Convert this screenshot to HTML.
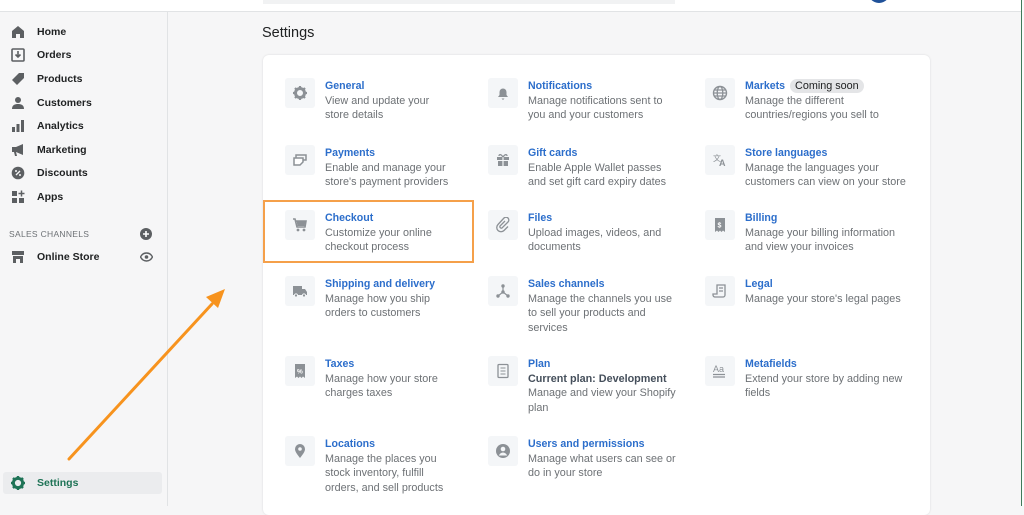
<!DOCTYPE html>
<html><head><meta charset="utf-8"><style>
*{margin:0;padding:0;box-sizing:border-box}
body{width:1024px;height:506px;overflow:hidden;background:#f6f6f7;font-family:"Liberation Sans",Arial,sans-serif;position:relative}
.top{position:absolute;left:0;top:0;width:1024px;height:12px;background:#fff;border-bottom:1px solid #e1e3e5}
.search{position:absolute;left:263px;top:0;width:412px;height:4px;background:#f1f2f3}
.avatar{position:absolute;left:868px;top:-8px;width:22px;height:11px;border-radius:0 0 11px 11px;background:#1f5199}
.side{position:absolute;left:0;top:12px;width:168px;height:494px;background:#f6f6f7;border-right:1px solid #e1e3e5}
.nav{position:absolute;left:37px;font-size:10.5px;font-weight:bold;color:#202223}
.nicon{position:absolute;left:11px;width:14px;height:14px}
.sc{position:absolute;left:9px;top:229px;font-size:8.5px;color:#6d7175;letter-spacing:.3px}
.card{position:absolute;left:263px;top:55px;width:667px;height:460px;background:#fff;border-radius:6px;box-shadow:0 0 2px rgba(0,0,0,.12)}
h1{position:absolute;left:262px;top:25px;font-size:14.5px;font-weight:normal;color:#202223}
.it{position:absolute;width:200px}
.ib{position:absolute;left:0;top:0;width:30px;height:30px;background:#f4f6f8;border-radius:3px}
.ib svg{position:absolute;left:7px;top:7px;width:16px;height:16px}
.tx{position:absolute;left:40px;top:1px;width:130px;font-size:10.8px;line-height:14.5px;color:#6d7175}
.c2 .tx{width:152px}
.c3 .tx{width:162px}
.tx b{display:block;color:#2c6ecb;font-weight:bold;font-size:10.6px}
.tx i{font-style:normal;color:#454f5b;font-weight:bold}
.badge{display:inline-block;background:#e4e5e7;color:#202223;font-weight:normal;border-radius:8px;padding:0 5px;margin-left:5px;line-height:14px}
.hl{position:absolute;left:263px;top:200px;width:211px;height:63px;border:2px solid #f5a04a}
.set{position:absolute;left:3px;top:472px;width:159px;height:22px;background:#ebecee;border-radius:3px}
.rline{position:absolute;left:1021px;top:0;width:3px;height:506px;background:#fafafa;border-left:1px solid #3f7a5a}
</style></head><body>
<div class="top"><div class="search"></div><div class="avatar"></div></div>
<div class="side"></div>
<svg class="nicon" style="top:25px" viewBox="0 0 14 14"><path d="M1 6L7 1l6 5v7H9V9H5v4H1z" fill="#5c5f62"/></svg>
<div class="nav" style="top:26px">Home</div>
<svg class="nicon" style="top:48px" viewBox="0 0 14 14"><rect x="1" y="1" width="12" height="12" rx="1" fill="none" stroke="#5c5f62" stroke-width="1.6"/><path d="M7 3v6M4.5 6.5L7 9l2.5-2.5" stroke="#5c5f62" stroke-width="1.6" fill="none"/></svg>
<div class="nav" style="top:49px">Orders</div>
<svg class="nicon" style="top:72px" viewBox="0 0 14 14"><path d="M1 8L8 1h5v5l-7 7z" fill="#5c5f62"/></svg>
<div class="nav" style="top:73px">Products</div>
<svg class="nicon" style="top:96px" viewBox="0 0 14 14"><circle cx="7" cy="4" r="3" fill="#5c5f62"/><path d="M1 13c0-4 3-5 6-5s6 1 6 5z" fill="#5c5f62"/></svg>
<div class="nav" style="top:97px">Customers</div>
<svg class="nicon" style="top:119px" viewBox="0 0 14 14"><rect x="1" y="8" width="3" height="5" fill="#5c5f62"/><rect x="5.5" y="5" width="3" height="8" fill="#5c5f62"/><rect x="10" y="1" width="3" height="12" fill="#5c5f62"/></svg>
<div class="nav" style="top:120px">Analytics</div>
<svg class="nicon" style="top:143px" viewBox="0 0 14 14"><path d="M1 4h4l7-3v11L5 9H1zM3 9l1 4h2l-1-4z" fill="#5c5f62"/></svg>
<div class="nav" style="top:144px">Marketing</div>
<svg class="nicon" style="top:166px" viewBox="0 0 14 14"><circle cx="7" cy="7" r="6.3" fill="#5c5f62"/><path d="M5 9l4-4" stroke="#f6f6f7" stroke-width="1.3"/><circle cx="5" cy="5" r="1" fill="#f6f6f7"/><circle cx="9" cy="9" r="1" fill="#f6f6f7"/></svg>
<div class="nav" style="top:167px">Discounts</div>
<svg class="nicon" style="top:190px" viewBox="0 0 14 14"><rect x="1" y="1" width="5" height="5" fill="#5c5f62"/><rect x="1" y="8" width="5" height="5" fill="#5c5f62"/><rect x="8" y="8" width="5" height="5" fill="#5c5f62"/><path d="M10.5 0.5v6M7.5 3.5h6" stroke="#5c5f62" stroke-width="1.5"/></svg>
<div class="nav" style="top:191px">Apps</div>
<div class="sc">SALES CHANNELS</div>
<svg style="position:absolute;left:140px;top:228px;width:12px;height:12px" viewBox="0 0 12 12"><circle cx="6" cy="6" r="6" fill="#5c5f62"/><path d="M6 3v6M3 6h6" stroke="#fff" stroke-width="1.6"/></svg>
<svg class="nicon" style="top:250px" viewBox="0 0 14 14"><path d="M1 1h12v4H1zM2 6h10v7H9V9H5v4H2z" fill="#5c5f62"/></svg>
<div class="nav" style="top:251px">Online Store</div>
<svg style="position:absolute;left:140px;top:252px;width:13px;height:10px" viewBox="0 0 13 10"><path d="M0.5 5C2 2 4 1 6.5 1S11 2 12.5 5C11 8 9 9 6.5 9S2 8 0.5 5z" fill="none" stroke="#5c5f62" stroke-width="1.4"/><circle cx="6.5" cy="5" r="1.8" fill="#5c5f62"/></svg>
<div class="set"></div>
<svg class="nicon" style="top:476px" viewBox="0 0 14 14"><circle cx="7" cy="7" r="4.6" fill="none" stroke="#1e7356" stroke-width="3"/><path d="M7 0v3M7 11v3M0 7h3M11 7h3M2 2l2 2M10 10l2 2M2 12l2-2M10 4l2-2" stroke="#1e7356" stroke-width="2.4"/></svg>
<div class="nav" style="top:477px;color:#1e7356">Settings</div>

<h1>Settings</h1>
<div class="card"></div>

<div class="it" style="left:285px;top:78px"><div class="ib"><svg viewBox="0 0 16 16"><circle cx="8" cy="8" r="4.5" fill="none" stroke="#8c9196" stroke-width="3"/><path d="M8 1v3M8 12v3M1 8h3M12 8h3M3 3l2 2M11 11l2 2M3 13l2-2M11 5l2-2" stroke="#8c9196" stroke-width="2.2"/></svg></div><div class="tx"><b>General</b>View and update your store details</div></div>
<div class="it c2" style="left:488px;top:78px"><div class="ib"><svg viewBox="0 0 16 16"><path d="M3 12h10l-1.5-2V7a3.5 3.5 0 00-7 0v3zM6.5 13.5h3L8 15z" fill="#8c9196"/></svg></div><div class="tx"><b>Notifications</b>Manage notifications sent to<br>you and your customers</div></div>
<div class="it c3" style="left:705px;top:78px"><div class="ib"><svg viewBox="0 0 16 16"><circle cx="8" cy="8" r="6.5" fill="none" stroke="#8c9196" stroke-width="1.4"/><ellipse cx="8" cy="8" rx="2.8" ry="6.5" fill="none" stroke="#8c9196" stroke-width="1.3"/><path d="M1.5 8h13M2.5 5h11M2.5 11h11" stroke="#8c9196" stroke-width="1.2"/></svg></div><div class="tx" style="width:185px"><b style="display:inline">Markets</b><span class="badge">Coming soon</span><br>Manage the different<br>countries/regions you sell to</div></div>

<div class="it" style="left:285px;top:145px"><div class="ib"><svg viewBox="0 0 16 16"><path d="M4 3h10v5H4z" fill="none" stroke="#8c9196" stroke-width="1.5"/><path d="M2 6h9v4l-3 3H2z" fill="#fff" stroke="#8c9196" stroke-width="1.5"/></svg></div><div class="tx"><b>Payments</b>Enable and manage your store's payment providers</div></div>
<div class="it c2" style="left:488px;top:145px"><div class="ib"><svg viewBox="0 0 16 16"><path d="M2 5h12v3H2zM3 9h10v5H3z" fill="#8c9196"/><path d="M8 5v9" stroke="#f4f6f8" stroke-width="1.2"/><path d="M8 5C6 2 4 2 4 4M8 5c2-3 4-3 4-1" stroke="#8c9196" stroke-width="1.3" fill="none"/></svg></div><div class="tx"><b>Gift cards</b>Enable Apple Wallet passes<br>and set gift card expiry dates</div></div>
<div class="it c3" style="left:705px;top:145px"><div class="ib"><svg viewBox="0 0 16 16"><text x="1" y="9" font-size="8" fill="#8c9196" font-family="Liberation Sans">文</text><text x="7" y="14" font-size="9" fill="#8c9196" font-family="Liberation Sans" font-weight="bold">A</text></svg></div><div class="tx"><b>Store languages</b>Manage the languages your customers can view on your store</div></div>

<div class="it" style="left:285px;top:210px"><div class="ib"><svg viewBox="0 0 16 16"><path d="M1 2h2l2 8h8l1-6H4" fill="none" stroke="#8c9196" stroke-width="1.6"/><path d="M4.5 4h9l-1 5h-7z" fill="#8c9196"/><circle cx="6" cy="13" r="1.4" fill="#8c9196"/><circle cx="12" cy="13" r="1.4" fill="#8c9196"/></svg></div><div class="tx"><b>Checkout</b>Customize your online checkout process</div></div>
<div class="it c2" style="left:488px;top:210px"><div class="ib"><svg viewBox="0 0 16 16"><path d="M10 4l-5 5a1.5 1.5 0 002 2l6-6a2.7 2.7 0 00-4-4L3 7.5a4 4 0 006 6l4-4" fill="none" stroke="#8c9196" stroke-width="1.3"/></svg></div><div class="tx"><b>Files</b>Upload images, videos, and<br>documents</div></div>
<div class="it c3" style="left:705px;top:210px"><div class="ib"><svg viewBox="0 0 16 16"><path d="M3 1h10v14l-2-1.5L9.5 15 8 13.5 6.5 15 5 13.5 3 15z" fill="#8c9196"/><text x="5.5" y="10.5" font-size="7" fill="#fff" font-family="Liberation Sans" font-weight="bold">$</text></svg></div><div class="tx"><b>Billing</b>Manage your billing information and view your invoices</div></div>

<div class="it" style="left:285px;top:276px"><div class="ib"><svg viewBox="0 0 16 16"><path d="M1 3h9v9H1zM10 6h3l2 3v3h-5z" fill="#8c9196"/><circle cx="4" cy="12.5" r="1.6" fill="#8c9196" stroke="#f4f6f8"/><circle cx="12" cy="12.5" r="1.6" fill="#8c9196" stroke="#f4f6f8"/></svg></div><div class="tx"><b style="white-space:nowrap">Shipping and delivery</b>Manage how you ship orders to customers</div></div>
<div class="it c2" style="left:488px;top:276px"><div class="ib"><svg viewBox="0 0 16 16"><path d="M8 3v6L3 13M8 9l5 4" stroke="#8c9196" stroke-width="1.2" fill="none"/><circle cx="8" cy="3" r="1.7" fill="#8c9196"/><circle cx="8" cy="9" r="1.7" fill="#8c9196"/><circle cx="3" cy="13" r="1.7" fill="#8c9196"/><circle cx="13" cy="13" r="1.7" fill="#8c9196"/></svg></div><div class="tx"><b>Sales channels</b>Manage the channels you use<br>to sell your products and<br>services</div></div>
<div class="it c3" style="left:705px;top:276px"><div class="ib"><svg viewBox="0 0 16 16"><path d="M5 2h8v10a2 2 0 01-2 2H3a2 2 0 01-2-2v-1h4z" fill="none" stroke="#8c9196" stroke-width="1.3"/><path d="M7 5h4M7 8h4" stroke="#8c9196" stroke-width="1.2"/></svg></div><div class="tx" style="width:185px"><b>Legal</b>Manage your store's legal pages</div></div>

<div class="it" style="left:285px;top:356px"><div class="ib"><svg viewBox="0 0 16 16"><path d="M3 1h10v14l-2-1.5L9.5 15 8 13.5 6.5 15 5 13.5 3 15z" fill="#8c9196"/><text x="5" y="10.5" font-size="6.5" fill="#fff" font-family="Liberation Sans" font-weight="bold">%</text></svg></div><div class="tx"><b>Taxes</b>Manage how your store charges taxes</div></div>
<div class="it c2" style="left:488px;top:356px"><div class="ib"><svg viewBox="0 0 16 16"><rect x="3" y="1.5" width="10" height="13" rx="1" fill="none" stroke="#8c9196" stroke-width="1.3"/><path d="M5.5 5h5M5.5 8h5M5.5 11h5" stroke="#8c9196" stroke-width="1"/></svg></div><div class="tx"><b>Plan</b><i>Current plan: Development</i><br>Manage and view your Shopify<br>plan</div></div>
<div class="it c3" style="left:705px;top:356px"><div class="ib"><svg viewBox="0 0 16 16"><text x="1" y="9" font-size="9" fill="#8c9196" font-family="Liberation Sans">Aa</text><path d="M1 11.5h12M1 14h12" stroke="#8c9196" stroke-width="1.2"/></svg></div><div class="tx"><b>Metafields</b>Extend your store by adding new fields</div></div>

<div class="it" style="left:285px;top:436px"><div class="ib"><svg viewBox="0 0 16 16"><path d="M8 15C4 10 3 8 3 6a5 5 0 0110 0c0 2-1 4-5 9z" fill="#8c9196"/><circle cx="8" cy="6" r="1.8" fill="#f4f6f8"/></svg></div><div class="tx"><b>Locations</b>Manage the places you stock inventory, fulfill orders, and sell products</div></div>
<div class="it c2" style="left:488px;top:436px"><div class="ib"><svg viewBox="0 0 16 16"><circle cx="8" cy="8" r="7" fill="#8c9196"/><circle cx="8" cy="6" r="2.3" fill="#f4f6f8"/><path d="M3.8 12.5c1-2 2.5-3 4.2-3s3.2 1 4.2 3" fill="#f4f6f8"/></svg></div><div class="tx"><b style="white-space:nowrap">Users and permissions</b>Manage what users can see or<br>do in your store</div></div>

<div class="hl"></div>
<svg style="position:absolute;left:0;top:0;width:1024px;height:506px;pointer-events:none" viewBox="0 0 1024 506"><line x1="69" y1="459" x2="212" y2="304" stroke="#f7931e" stroke-width="3" stroke-linecap="round"/><path d="M225 289L206 297L218 308Z" fill="#f7931e"/></svg>
<div class="rline"></div>
</body></html>
